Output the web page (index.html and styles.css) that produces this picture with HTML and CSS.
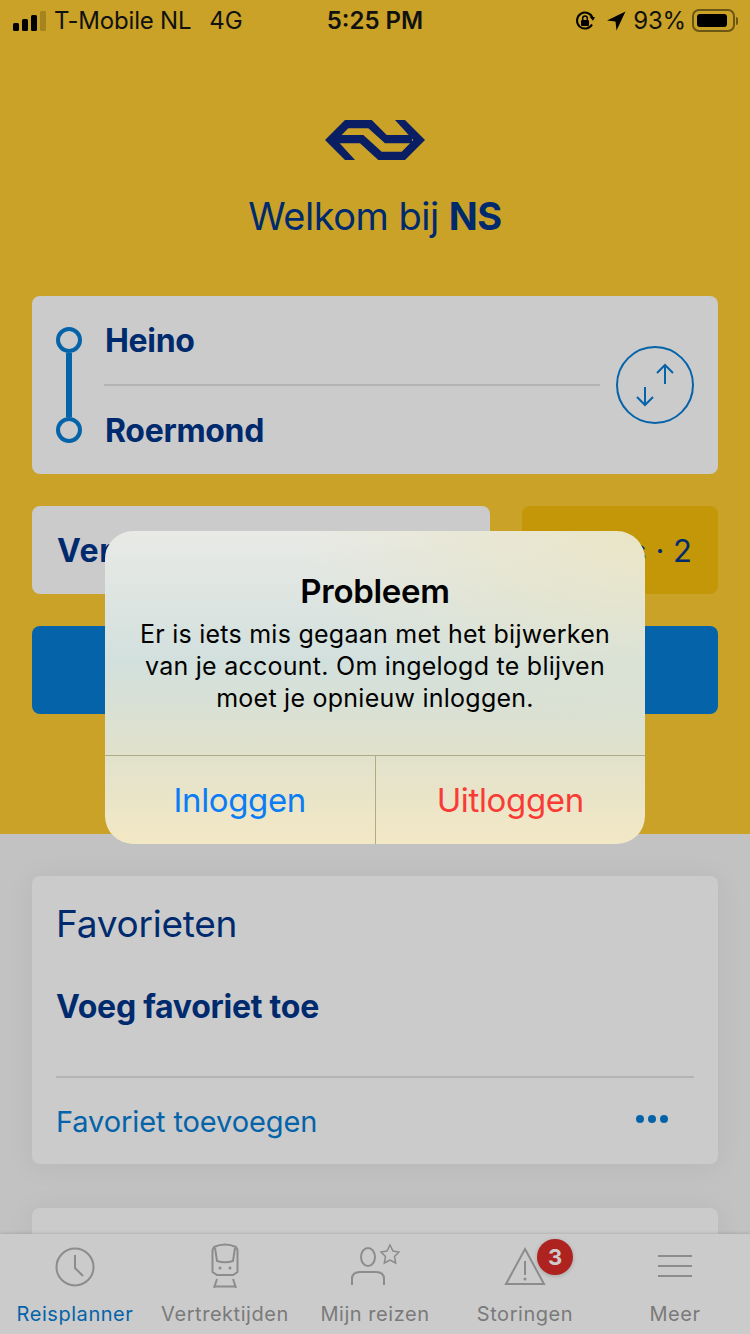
FILE: index.html
```html
<!DOCTYPE html>
<html lang="nl">
<head>
    <meta charset="UTF-8">
    <meta name="viewport" content="width=device-width, initial-scale=1.0">
    <title>NS Reisplanner</title>
    <link rel="stylesheet" href="styles.css">
</head>
<body>
    <div class="screen">
        <div class="scroll">
            <section class="hero">
                <div class="status-bar">
                    <div class="status-left">
                        <div class="signal"><i></i><i></i><i></i><i class="off"></i></div>
                        <span>T-Mobile NL</span>
                        <span class="network">4G</span>
                    </div>
                    <div class="status-time">5:25 PM</div>
                    <div class="status-right">
                        <svg class="icon-lock" width="22" height="22" viewBox="0 0 22 22">
                            <path d="M18 14.5A8 8 0 1 1 18.6 8" fill="none" stroke="#000" stroke-width="2"/>
                            <path d="M20.8 8.5 15.5 9.5 18.8 5Z" fill="#000" transform="rotate(60 18 8)"/>
                            <rect x="7" y="10" width="8" height="6" rx="1" fill="#000"/>
                            <path d="M8.7 10V8.3a2.3 2.3 0 0 1 4.6 0V10" fill="none" stroke="#000" stroke-width="1.5"/>
                        </svg>
                        <svg class="icon-arrow" width="20" height="20" viewBox="0 0 20 20">
                            <path d="M19.500.5 1 9.500 9.500 10.500 10.500 19.500Z" fill="#000"/>
                        </svg>
                        <span class="battery-text">93%</span>
                        <div class="battery"><div class="battery-fill"></div></div>
                        <div class="battery-tip"></div>
                    </div>
                </div>

                <div class="hero-content">
                    <svg class="logo" width="102" height="42" viewBox="0 0 102 42">
                        <path d="M1 21 21 1H47.700L62.700 16H88V24.300H61L44.300 9.300H24.300L12.700 21 31 41H21Z" fill="#0a1e63"/>
                        <path d="M71 1H81L101 21 81 41H54.300L36 24.300H9.300L16 16H39.300L57.700 32.700H77.700L89.300 21Z" fill="#0a1e63"/>
                    </svg>
                    <h1 class="welcome">Welkom bij <b>NS</b></h1>

                    <div class="card route">
                        <div class="route-line">
                            <span class="stop"></span>
                            <span class="rail"></span>
                            <span class="stop"></span>
                        </div>
                        <div class="route-names">
                            <div class="station">Heino</div>
                            <div class="station">Roermond</div>
                        </div>
                        <button class="swap">
                            <svg width="78" height="78" viewBox="0 0 78 78">
                                <circle cx="39" cy="39" r="38" fill="none" stroke="#0563a9" stroke-width="2"/>
                                <path d="M49 38V19M41 27 49 19 57 27M29 41V59M21 51 29 59 37 51" fill="none" stroke="#0563a9" stroke-width="2"/>
                            </svg>
                        </button>
                    </div>

                    <div class="options">
                        <div class="card depart">Vertrek nu</div>
                        <div class="travellers">Reizigers · 2</div>
                    </div>

                    <button class="plan"></button>
                </div>
            </section>

            <section class="lower">
                <div class="card favourites">
                    <h2>Favorieten</h2>
                    <div class="fav-empty">Voeg favoriet toe</div>
                    <div class="fav-footer">
                        <span>Favoriet toevoegen</span>
                        <div class="dots"><i></i><i></i><i></i></div>
                    </div>
                </div>
                <div class="card next-card"></div>
            </section>
        </div>

        <nav class="tabs">
            <div class="tab active">
                <svg width="42" height="42" viewBox="0 0 42 42" fill="none" stroke="#8c8c8c" stroke-width="2">
                    <circle cx="21" cy="21" r="18.500"/>
                    <path d="M21 9V22L29 30"/>
                </svg>
                <span>Reisplanner</span>
            </div>
            <div class="tab">
                <svg class="tall" width="42" height="46" viewBox="0 0 42 46" fill="none" stroke="#8c8c8c" stroke-width="2">
                    <path d="M10 4Q21-1 32 4L33.500 7V29L29 32H13L8.500 29V7Z"/>
                    <path d="M11 5 13 18Q21 20.500 29 18L31 5"/>
                    <path d="M13 36 10 45M29 36 32 45M11 43.500H31"/>
                    <circle cx="16" cy="25" r="1.500" fill="#8c8c8c" stroke="none"/>
                    <circle cx="26" cy="25" r="1.500" fill="#8c8c8c" stroke="none"/>
                </svg>
                <span>Vertrektijden</span>
            </div>
            <div class="tab">
                <svg class="tall" width="50" height="46" viewBox="0 0 50 46" fill="none" stroke="#8c8c8c" stroke-width="2">
                    <ellipse cx="18" cy="14" rx="7" ry="9"/>
                    <path d="M2 42V36Q2 29 10 29H26Q34 29 34 36V42"/>
                    <path d="M40 2 43 8 49 9 44.500 13.500 45.700 20 40 17 34.300 20 35.500 13.500 31 9 37 8Z" stroke-width="1.500"/>
                </svg>
                <span>Mijn reizen</span>
            </div>
            <div class="tab">
                <svg width="42" height="42" viewBox="0 0 42 42" fill="none" stroke="#8c8c8c" stroke-width="2">
                    <path d="M21 3 40 38H2Z"/>
                    <path d="M21 15V29"/>
                    <circle cx="21" cy="33" r="1.500" fill="#8c8c8c" stroke="none"/>
                </svg>
                <span>Storingen</span>
                <div class="badge">3</div>
            </div>
            <div class="tab">
                <svg width="42" height="42" viewBox="0 0 42 42" fill="none" stroke="#8c8c8c" stroke-width="2">
                    <path d="M4 10H38M4 20H38M4 30H38"/>
                </svg>
                <span>Meer</span>
            </div>
        </nav>

        <!-- Login problem dialog -->
        <div class="alert-layer">
            <div class="alert">
                <div class="alert-body">
                    <h3>Probleem</h3>
                    <p>Er is iets mis gegaan met het bijwerken van je account. Om ingelogd te blijven moet je opnieuw inloggen.</p>
                </div>
                <div class="alert-actions">
                    <button class="alert-btn login">Inloggen</button>
                    <button class="alert-btn logout">Uitloggen</button>
                </div>
            </div>
        </div>
    </div>
</body>
</html>
```

FILE: styles.css
```css
/* === Theme === */
:root {
    --yellow: #c9a227;
    --yellow-dark: #c39708;
    --card: #cbcbcb;
    --page: #c2c2c2;
    --navy: #002a6e;
    --blue: #0563a9;
    --line: #b4b4b4;
    --tab-text: #7a7a7a;
}

/* === Layout === */
* {
    box-sizing: border-box;
}

body {
    margin: 0;
    font-family: "Inter", "Liberation Sans", sans-serif;
    color: var(--navy);
}

.screen {
    position: relative;
    display: flex;
    flex-direction: column;
    width: 750px;
    height: 1334px;
    overflow: hidden;
    background: var(--page);
}

.scroll {
    flex: 1;
    min-height: 0;
    overflow: hidden;
}

/* === Status bar === */
.status-bar {
    display: flex;
    align-items: center;
    justify-content: space-between;
    height: 40px;
    padding: 1px 13px 0;
    color: #111;
    font-size: 24px;
    position: relative;
}

.status-left,
.status-right {
    display: flex;
    align-items: center;
}

.status-left span {
    margin-left: 8px;
    letter-spacing: -0.2px;
}

.status-left .network {
    margin-left: 18px;
}

.signal {
    display: flex;
    align-items: flex-end;
    gap: 3px;
    height: 20px;
}

.signal i {
    width: 6px;
    border-radius: 1.5px;
    background: #000;
}

.signal i:nth-child(1) { height: 8px; }
.signal i:nth-child(2) { height: 12px; }
.signal i:nth-child(3) { height: 16px; }
.signal i:nth-child(4) { height: 20px; }

.signal .off {
    background: #a5841f;
}

.status-time {
    position: absolute;
    left: 0;
    right: 0;
    text-align: center;
    font-weight: 600;
    pointer-events: none;
}

.status-right {
    margin-right: -1px;
}

.icon-arrow {
    margin-left: 10px;
}

.battery-text {
    margin-left: 7px;
    letter-spacing: -0.2px;
}

.battery {
    width: 43px;
    height: 23px;
    margin-left: 6px;
    padding: 3px;
    border: 2px solid #6c5614;
    border-radius: 7px;
}

.battery-fill {
    width: 92%;
    height: 100%;
    border-radius: 3px;
    background: #000;
}

.battery-tip {
    width: 2px;
    height: 8px;
    margin-left: 1px;
    border-radius: 0 2px 2px 0;
    background: #6c5614;
}

/* === Hero === */
.hero {
    height: 834px;
    background: var(--yellow);
}

.hero-content {
    padding: 0 32px;
}

.logo {
    display: block;
    margin: 79px auto 0;
}

.welcome {
    margin: 29px 0 0;
    text-align: center;
    font-size: 38px;
    line-height: 52px;
    font-weight: 400;
    letter-spacing: -0.5px;
}

.welcome b {
    font-weight: 700;
}

.card {
    border-radius: 8px;
    background: var(--card);
}

.route {
    display: flex;
    align-items: center;
    height: 178px;
    margin-top: 54px;
    padding: 0 24px;
}

.route-line {
    display: flex;
    flex-direction: column;
    align-items: center;
    width: 26px;
    margin-right: 22px;
}

.stop {
    width: 26px;
    height: 26px;
    border: 4px solid var(--blue);
    border-radius: 50%;
}

.rail {
    width: 6px;
    height: 64px;
    background: var(--blue);
}

.route-names {
    flex: 1;
    align-self: flex-start;
}

.station {
    display: flex;
    align-items: center;
    height: 88px;
    padding-left: 1px;
    font-size: 32px;
    font-weight: 700;
    letter-spacing: -0.3px;
}

.station:first-child {
    height: 90px;
    border-bottom: 2px solid var(--line);
}

.swap {
    width: 78px;
    height: 78px;
    margin-left: 16px;
    padding: 0;
    border: none;
    background: none;
}

.swap svg {
    display: block;
}

.options {
    display: flex;
    gap: 32px;
    margin-top: 32px;
}

.depart {
    flex: 1;
    display: flex;
    align-items: center;
    height: 88px;
    padding-left: 25px;
    font-size: 32px;
    font-weight: 700;
    letter-spacing: 0.6px;
}

/* text runs wider than the box, flex-end keeps the count on the right */
.travellers {
    flex: 0 0 196px;
    min-width: 0;
    display: flex;
    align-items: center;
    justify-content: flex-end;
    padding-right: 26px;
    border-radius: 8px;
    background: var(--yellow-dark);
    font-size: 31px;
    white-space: nowrap;
}

.plan {
    display: block;
    width: 100%;
    height: 88px;
    margin-top: 32px;
    border: none;
    border-radius: 8px;
    background: var(--blue);
}

/* === Favourites === */
.lower {
    padding: 42px 32px 0;
}

.favourites {
    height: 288px;
    padding: 0 24px;
    box-shadow: 0 2px 30px rgba(0, 0, 0, 0.06);
}

.favourites h2 {
    margin: 0;
    padding-top: 24px;
    font-size: 37px;
    line-height: 48px;
    font-weight: 400;
    letter-spacing: -0.25px;
}

.fav-empty {
    margin-top: 39px;
    font-size: 32px;
    line-height: 40px;
    font-weight: 700;
    letter-spacing: -0.25px;
}

.fav-footer {
    display: flex;
    align-items: center;
    justify-content: space-between;
    height: 88px;
    margin-top: 49px;
    padding-right: 26px;
    border-top: 2px solid var(--line);
    color: var(--blue);
    font-size: 29px;
    letter-spacing: -0.1px;
}

.dots {
    display: flex;
    gap: 4px;
    margin-top: -4px;
}

.dots i {
    width: 8px;
    height: 8px;
    border-radius: 50%;
    background: var(--blue);
}

.next-card {
    height: 60px;
    margin-top: 44px;
    box-shadow: 0 2px 30px rgba(0, 0, 0, 0.06);
}

/* === Tab bar === */
.tabs {
    display: flex;
    position: relative;
    height: 100px;
    background: var(--card);
    box-shadow: 0 -1px 3px rgba(0, 0, 0, 0.12);
}

.tab {
    position: relative;
    flex: 1;
    display: flex;
    flex-direction: column;
    align-items: center;
    justify-content: flex-end;
    padding-bottom: 8px;
    color: var(--tab-text);
    font-size: 20px;
    line-height: 24px;
    letter-spacing: 0.55px;
}

.tab svg {
    position: absolute;
    top: 12px;
}

.tab svg.tall {
    top: 9px;
}

.tab.active {
    color: var(--blue);
}

.badge {
    position: absolute;
    top: 5px;
    left: 87px;
    width: 36px;
    height: 36px;
    border-radius: 50%;
    background: #ae2320;
    color: #ccc;
    font-size: 22px;
    font-weight: 700;
    line-height: 36px;
    text-align: center;
    letter-spacing: 0;
    box-shadow: 0 1px 4px rgba(0, 0, 0, 0.2);
}

/* === Alert === */
.alert-layer {
    position: absolute;
    top: 531px;
    left: 105px;
}

.alert {
    width: 540px;
    height: 313px;
    overflow: hidden;
    border-radius: 28px;
    background:
        radial-gradient(ellipse at 100% 0, #e9e5c6 0, rgba(233, 229, 198, 0) 45%),
        linear-gradient(180deg, #e9eae6 0%, #d2e0dd 42%, #e0e1cc 70%, #f3e8c5 100%);
    color: #000;
    text-align: center;
}

.alert-body {
    height: 225px;
    padding-top: 40px;
    border-bottom: 1px solid #aeac85;
}

.alert-body h3 {
    margin: 0 0 7px;
    font-size: 33px;
    line-height: 40px;
    font-weight: 600;
    letter-spacing: -0.3px;
}

.alert-body p {
    margin: 0;
    padding: 0 25px;
    font-size: 25px;
    line-height: 32px;
    letter-spacing: 0.25px;
}

.alert-actions {
    display: flex;
    height: 88px;
}

.alert-btn {
    flex: 1;
    border: none;
    background: none;
    font: 400 33px "Inter", sans-serif;
    letter-spacing: -0.35px;
}

.login {
    color: #0a7cf5;
    border-right: 1px solid #aeac85;
}

.logout {
    color: #f93b35;
}
```
